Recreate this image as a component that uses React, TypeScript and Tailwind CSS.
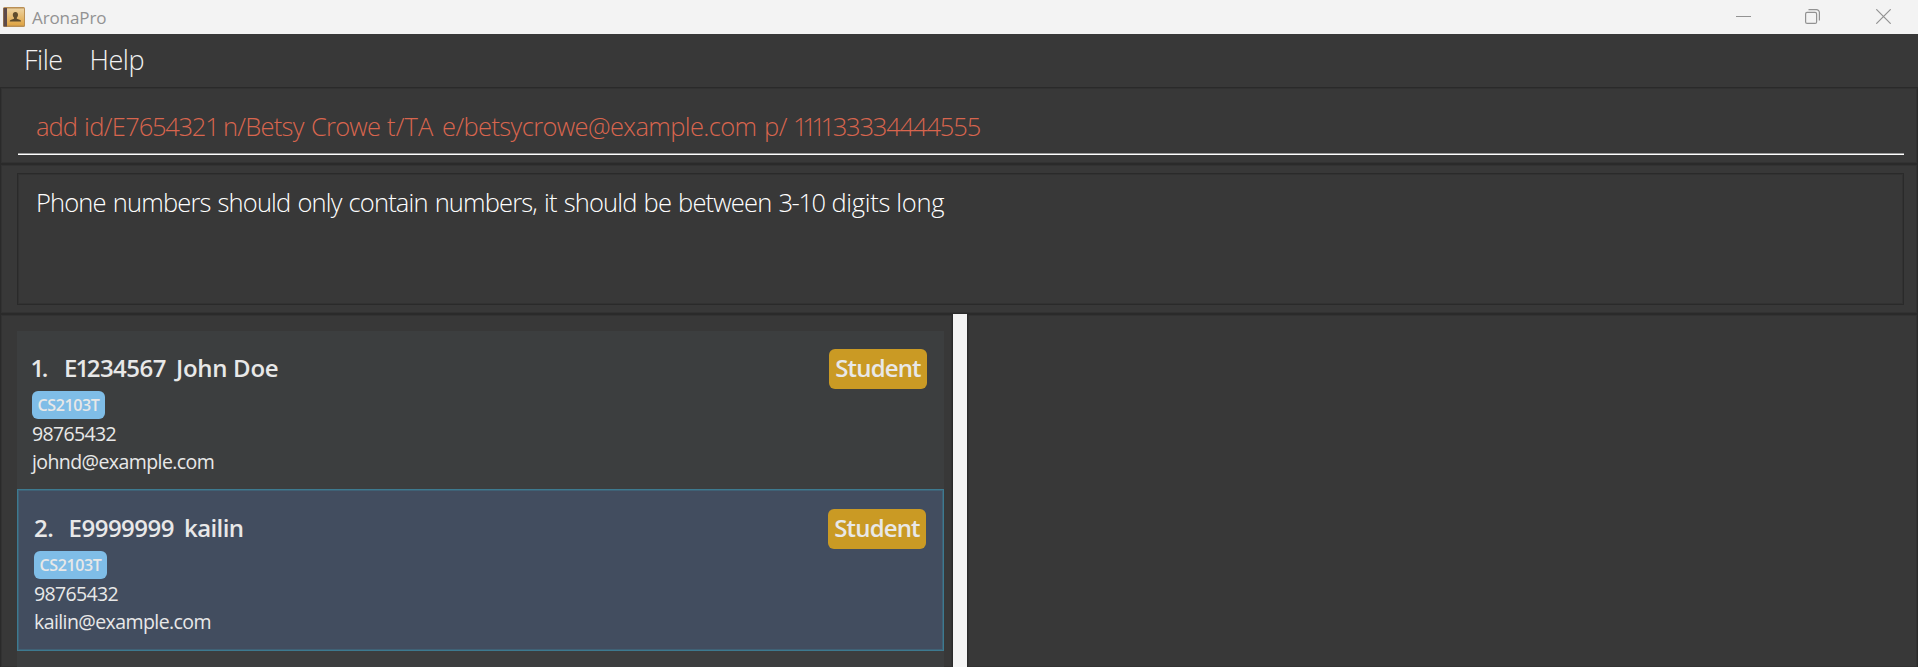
import React from "react";

type Person = {
  index: number;
  id: string;
  name: string;
  role: string;
  tag: string;
  phone: string;
  email: string;
};

const people: Person[] = [
  { index: 1, id: "E1234567", name: "John Doe", role: "Student", tag: "CS2103T", phone: "98765432", email: "johnd@example.com" },
  { index: 2, id: "E9999999", name: "kailin", role: "Student", tag: "CS2103T", phone: "98765432", email: "kailin@example.com" },
];

const panel = "border border-[#2a2a2a] shadow-[inset_0_0_0_1px_#323232]";

function AppIcon() {
  return (
    <svg width="22" height="20" viewBox="0 0 22 20" className="shrink-0">
      <defs>
        <linearGradient id="cover" x1="0" y1="0" x2="0" y2="1">
          <stop offset="0" stopColor="#ecd2a0" />
          <stop offset="1" stopColor="#dfa443" />
        </linearGradient>
      </defs>
      <rect x="0" y="0" width="22" height="20" rx="1.5" fill="#b98f55" />
      <rect x="0.5" y="1" width="3.5" height="18.5" fill="#5c4a4a" />
      <rect x="4" y="1.5" width="17" height="17" fill="url(#cover)" />
      <path d="M12.4 5c1.6 0 2.600 1.200 2.600 2.800 0 1.200-.5 2.200-1.200 2.900v1l3.400 1.200c.5.2.8.6.8 1.700H6.800c0-1.100.3-1.500.8-1.700l3.400-1.200v-1c-.7-.7-1.200-1.700-1.200-2.900C9.800 6.200 10.800 5 12.400 5z" fill="#5f4c2c" />
    </svg>
  );
}

function TitleBar() {
  return (
    <header className="flex h-[34px] shrink-0 items-center bg-[#f3f3f3] pl-[3px] text-[#929292]">
      <AppIcon />
      <span className="ml-[7px] mt-px text-[17px] leading-6 tracking-[-0.1px]">AronaPro</span>
      <div className="mb-px ml-auto flex items-center pr-[27px]">
        <svg width="15" height="15" viewBox="0 0 15 15" fill="none" stroke="currentColor">
          <path d="M0 7.500H15" />
        </svg>
        <svg width="15" height="15" viewBox="0 0 15 15" fill="none" stroke="currentColor" strokeWidth="1.200" className="ml-[54px]">
          <rect x="0.600" y="3.400" width="11" height="11" rx="1.500" />
          <path d="M3.500 .6H11.400a3 3 0 0 1 3 3V11.500" />
        </svg>
        <svg width="15" height="15" viewBox="0 0 15 15" fill="none" stroke="currentColor" strokeWidth="1.200" className="ml-[56px]">
          <path d="M.3 .3L14.700 14.700M14.700 .3L.3 14.700" />
        </svg>
      </div>
    </header>
  );
}

/* Bold figures, with the narrow "1" set tighter than the other digits. */
function Figures({ text }: { text: string }) {
  return (
    <>
      {text.split("").map((c, i) =>
        c === "1" ? (
          <span key={i} className="-ml-[1.500px] tracking-[-2.500px]">{c}</span>
        ) : (
          <React.Fragment key={i}>{c}</React.Fragment>
        ),
      )}
    </>
  );
}

function PersonCard({ person, selected }: { person: Person; selected: boolean }) {
  return (
    <li
      className={
        selected
          ? "flex h-[162px] items-start justify-between border border-[#3d7a90] bg-[#424d5f] pl-4 pr-[17px] pt-[19px] shadow-[inset_0_0_0_1px_#3f6175]"
          : "flex h-[158px] items-start justify-between bg-[#3c3e3f] pl-[15px] pr-[17px] pt-[18px]"
      }
    >
      <div className="flex flex-col items-start">
        <h2 className="flex h-[42px] items-center whitespace-pre pb-[5px] text-[24px] font-semibold leading-8">
          <span className={selected ? "w-[34.500px] tracking-[-0.6px]" : "w-[32px] tracking-[-0.6px]"}>
            <Figures text={`${person.index}.`} />
          </span>
          <span className="tracking-[-0.5px]">
            <Figures text={person.id} />
          </span>
          <span className={selected ? "ml-[10px] tracking-[-0.600px]" : "ml-[10px] tracking-[-0.3px]"}>{person.name}</span>
        </h2>
        <span className="flex h-7 w-[73px] items-center justify-center rounded-[6px] bg-[#7fbde7] text-[16px] font-semibold tracking-[-0.35px]">
          {person.tag}
        </span>
        <span className="h-7 pt-px text-[19.500px] leading-7 tracking-[-0.65px]">{person.phone}</span>
        <span className="h-7 pt-px text-[19.500px] leading-7 tracking-[-0.58px]">{person.email}</span>
      </div>
      <span className="flex h-10 w-[98px] items-center justify-center rounded-[6px] bg-[#ca9a24] pb-[2px] text-[24px] font-semibold tracking-[-0.85px]">
        {person.role}
      </span>
    </li>
  );
}

function CommandText() {
  return (
    <p className="flex whitespace-pre">
      <span className="w-[48px] tracking-[-1px]">add </span>
      <span className="w-[139px] tracking-[-0.6px]">
        id/E<span className="tracking-[-1.250px]">7654321 </span>
      </span>
      <span className="w-[88px] tracking-[-0.75px]">n/Betsy </span>
      <span className="w-[76px] tracking-[-0.8px]">Crowe </span>
      <span className="w-[55px] tracking-[0.1px]">t/TA </span>
      <span className="w-[322px] tracking-[-0.62px]">e/betsycrowe@example.com </span>
      <span className="w-[30px] tracking-[-0.5px]">p/ </span>
      <span className="-ml-px tracking-[-5.400px]">1111</span>
      <span className="ml-[3px] tracking-[-1.150px]">33334444555</span>
    </p>
  );
}

export default function App() {
  return (
    <div className="flex h-[667px] w-[1918px] flex-col overflow-hidden bg-[#383838] font-['Open_Sans','Noto_Sans',sans-serif] text-[#e8e8e8]">
      <TitleBar />
      <nav className="flex h-[53px] shrink-0 items-center gap-[27px] pl-6 text-[27px] font-light text-[#f2f2f2]">
        <span className="tracking-[-0.5px]">File</span>
        <span className="tracking-[-0.5px]">Help</span>
      </nav>
      <section className={`flex h-[77px] shrink-0 flex-col pl-[17px] pr-[13px] pt-[18px] ${panel}`}>
        <div className="flex h-[49px] items-center border-b border-white pb-[7px] pl-[18px] text-[25.500px] font-light text-[#d8654e] shadow-[inset_0_-1px_0_#999999]">
          <CommandText />
        </div>
      </section>
      <section className={`h-[150px] shrink-0 py-2 pl-4 pr-[13px] ${panel}`}>
        <div className={`h-[132px] whitespace-pre px-[18px] pt-[9px] text-[25.500px] font-light text-white ${panel}`}>
          <span className="tracking-[-0.85px] [word-spacing:1.3px]">Phone numbers should only contain numbers, it should be between </span>
          <span className="tracking-[-1.400px] [word-spacing:1.5px]">3-10 </span>
          <span className="tracking-[-0.3px]">digits long</span>
        </div>
      </section>
      <main className="flex min-h-0 flex-1">
        <section className={`w-[953px] border-b-0 pl-4 pr-2 pt-4 ${panel}`}>
          <ul className="h-full bg-[#3c3e3f]">
            {people.map((p) => (
              <PersonCard key={p.index} person={p} selected={p.index === 2} />
            ))}
          </ul>
        </section>
        <div className="w-[14px] bg-[#f4f4f4]" />
        <section className={`flex-1 border-b-0 ${panel}`} />
      </main>
    </div>
  );
}
